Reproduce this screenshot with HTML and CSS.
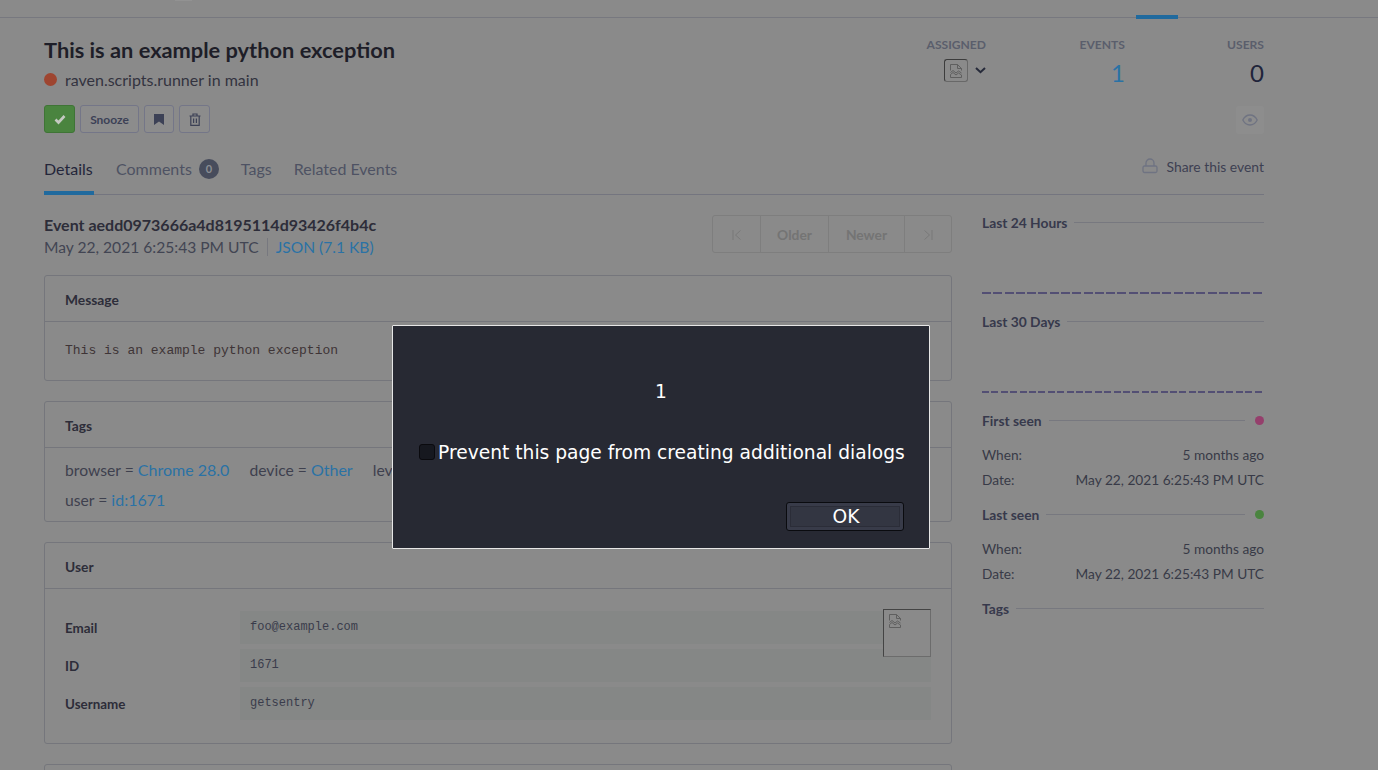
FILE: index.html
```html
<!DOCTYPE html>
<html lang="en">
<head>
  <meta charset="UTF-8">
  <title>This is an example python exception</title>
  <link rel="stylesheet" href="styles.css">
</head>
<body>
  <div class="topbar">
    <span class="topbar-mark"></span>
    <span class="topbar-tab"></span>
  </div>

  <div class="group-header">
    <div class="group-main">
      <h1 class="group-title">This is an example python exception</h1>
      <div class="group-sub"><span class="dot dot-error"></span>raven.scripts.runner in main</div>
      <div class="actions">
        <button class="btn btn-resolve">
          <svg width="12" height="12" viewBox="0 0 12 12"><path d="M1.500 6.500l3 3 6-6.500" fill="none" stroke="#c5c9c2" stroke-width="2.600"/></svg>
        </button>
        <button class="btn btn-snooze">Snooze</button>
        <button class="btn btn-icon">
          <svg width="10" height="11" viewBox="0 0 10 11"><path d="M0 0h10v11L5 7.500 0 11z" fill="#3c4156"/></svg>
        </button>
        <button class="btn btn-icon btn-trash">
          <svg width="12" height="13" viewBox="0 0 12 13"><path d="M.5 3h11M4 3V1h4v2M1.800 3v9.300h8.400V3M4.600 5.500v4.600M7.400 5.500v4.600" fill="none" stroke="#3c4156" stroke-width="1.200"/></svg>
        </button>
      </div>
    </div>
    <div class="group-stats">
      <div class="stat stat-assigned">
        <div class="stat-label">ASSIGNED</div>
        <div class="assignee">
          <span class="assignee-box">
            <svg class="broken" width="12" height="14" viewBox="0 0 12 14"><path d="M.5 6.500V.5h7L11.500 4.500v2M7.500.5v4h4M.5 8.500l2.500-2 3 2.500 2.500-2 3 2M.5 10.500l2.500-2 3 2.500 2.500-2 3 2v2.500H.5z" fill="none" stroke="#5f5f5f" stroke-width="1"/></svg>
          </span>
          <svg width="11" height="7" viewBox="0 0 11 7"><path d="M1 1l4.500 4.200L10 1" fill="none" stroke="#262a3a" stroke-width="2"/></svg>
        </div>
      </div>
      <div class="stat stat-events">
        <div class="stat-label">EVENTS</div>
        <div class="stat-value stat-link">1</div>
      </div>
      <div class="stat stat-users">
        <div class="stat-label">USERS</div>
        <div class="stat-value">0</div>
      </div>
      <div class="watch">
        <svg width="16" height="12" viewBox="0 0 16 12"><path d="M.8 6C2.500 2.800 5 1 8 1s5.500 1.800 7.200 5C13.500 9.200 11 11 8 11S2.500 9.200.8 6z" fill="none" stroke="#6f7382" stroke-width="1.300"/><circle cx="8" cy="6" r="2" fill="#6f7382"/></svg>
      </div>
    </div>
  </div>

  <div class="tabs">
    <a class="tab tab-active">Details</a>
    <a class="tab">Comments <span class="badge">0</span></a>
    <a class="tab">Tags</a>
    <a class="tab">Related Events</a>
    <a class="share">
      <svg width="16" height="16" viewBox="0 0 16 16"><path d="M4 8V5a4 4 0 0 1 8 0v3" fill="none" stroke="#6f7382" stroke-width="1.300"/><rect x="1" y="8" width="14" height="6.500" rx="1.500" fill="none" stroke="#6f7382" stroke-width="1.300"/></svg>
      Share this event
    </a>
  </div>

  <div class="content">
    <div class="main">
      <div class="event-bar">
        <div>
          <div class="event-id">Event aedd0973666a4d8195114d93426f4b4c</div>
          <div class="event-date">May 22, 2021 6:25:43 PM UTC<span class="event-json">JSON (7.1 KB)</span></div>
        </div>
        <div class="pager">
          <span class="pager-cell pager-end">
            <svg width="10" height="10" viewBox="0 0 10 10"><path d="M1 0v10M8.500 0.500L3.500 5l5 4.500" fill="none" stroke="#797979" stroke-width="1"/></svg>
          </span>
          <span class="pager-cell pager-older">Older</span>
          <span class="pager-cell pager-newer">Newer</span>
          <span class="pager-cell pager-end">
            <svg width="10" height="10" viewBox="0 0 10 10"><path d="M9 0v10M1.500 0.500L6.500 5l-5 4.500" fill="none" stroke="#797979" stroke-width="1"/></svg>
          </span>
        </div>
      </div>

      <section class="panel">
        <h3 class="panel-head">Message</h3>
        <div class="panel-body message-body">This is an example python exception</div>
      </section>

      <section class="panel">
        <h3 class="panel-head">Tags</h3>
        <div class="panel-body tags-body">
          <span class="tag">browser = <a>Chrome 28.0</a></span>
          <span class="tag">device = <a>Other</a></span>
          <span class="tag">level = <a>error</a></span>
          <span class="tag">user = <a>id:1671</a></span>
        </div>
      </section>

      <section class="panel panel-user">
        <h3 class="panel-head">User</h3>
        <div class="panel-body user-body">
          <div class="kv"><span class="kv-key">Email</span><code class="kv-val">foo@example.com</code></div>
          <div class="kv"><span class="kv-key">ID</span><code class="kv-val">1671</code></div>
          <div class="kv"><span class="kv-key">Username</span><code class="kv-val">getsentry</code></div>
          <div class="user-avatar">
            <svg width="12" height="14" viewBox="0 0 12 14"><path d="M.5 6.500V.5h7L11.500 4.500v2M7.500.5v4h4M.5 8.500l2.500-2 3 2.500 2.500-2 3 2M.5 10.500l2.500-2 3 2.500 2.500-2 3 2v2.500H.5z" fill="none" stroke="#5f5f5f" stroke-width="1"/></svg>
          </div>
        </div>
      </section>

      <section class="panel panel-next"></section>
    </div>

    <aside class="sidebar">
      <div class="side-head"><span>Last 24 Hours</span><i class="rule"></i></div>
      <div class="chart chart-24"></div>
      <div class="side-head"><span>Last 30 Days</span><i class="rule"></i></div>
      <div class="chart chart-30"></div>

      <div class="side-head side-seen"><span>First seen</span><i class="rule"></i><span class="dot-small dot-first"></span></div>
      <div class="side-row"><span>When:</span><span>5 months ago</span></div>
      <div class="side-row"><span>Date:</span><span>May 22, 2021 6:25:43 PM UTC</span></div>

      <div class="side-head side-seen side-last"><span>Last seen</span><i class="rule"></i><span class="dot-small dot-last"></span></div>
      <div class="side-row"><span>When:</span><span>5 months ago</span></div>
      <div class="side-row"><span>Date:</span><span>May 22, 2021 6:25:43 PM UTC</span></div>

      <div class="side-head side-tags"><span>Tags</span><i class="rule"></i></div>
    </aside>
  </div>

  <div class="dialog">
    <div class="dialog-msg">1</div>
    <label class="dialog-check"><span class="check-box"></span>Prevent this page from creating additional dialogs</label>
    <div class="dialog-foot"><button class="dialog-ok"><span>OK</span></button></div>
  </div>
</body>
</html>
```

FILE: styles.css
```css
* {
  box-sizing: border-box;
}

html, body {
  height: 770px;
  overflow: hidden;
}

body {
  margin: 0;
  background-color: #8a8a8a;
  color: #33333f;
  font-family: Lato, sans-serif;
  font-size: 16px;
}

a {
  color: #2a72a5;
}

/* top strip */
.topbar {
  position: relative;
  height: 18px;
  border-bottom: 1px solid #77787f;
}

.topbar-mark {
  position: absolute;
  left: 175px;
  top: 0;
  width: 17px;
  height: 1px;
  background-color: #929292;
}

.topbar-tab {
  position: absolute;
  left: 1136px;
  top: 15px;
  width: 42px;
  height: 4px;
  background-color: #206a9e;
}

/* group header */
.group-header {
  display: flex;
  justify-content: space-between;
  padding: 0 114px 0 44px;
  height: 126px;
}

.group-title {
  margin: 18px 0 0;
  font-size: 21.800px;
  line-height: 28px;
  font-weight: 700;
  color: #1e1e28;
}

.group-sub {
  display: flex;
  align-items: center;
  margin-top: 5px;
  height: 20px;
  color: #33333f;
}

.dot {
  width: 13px;
  height: 13px;
  border-radius: 50%;
  margin-right: 8px;
}

.dot-error {
  background-color: #9e4530;
}

.actions {
  display: flex;
  gap: 5px;
  margin-top: 16px;
}

.btn {
  display: flex;
  align-items: center;
  justify-content: center;
  height: 28px;
  padding: 0;
  border: 1px solid #747688;
  border-radius: 3px;
  background-color: #8c8c8c;
  font-family: Lato, sans-serif;
  font-size: 12px;
  font-weight: 700;
  color: #3c4156;
}

.btn-resolve {
  width: 31px;
  background-color: #4a843f;
  border-color: #3f7436;
}

.btn-snooze {
  width: 59px;
}

.btn-icon {
  width: 30px;
}

.btn-trash {
  width: 31px;
}

.group-stats {
  display: grid;
  grid-template-columns: 60px 139px 139px;
  grid-template-rows: 57px auto;
  padding-top: 20px;
  height: 126px;
}

.stat {
  text-align: right;
}

.stat-label {
  font-size: 12.100px;
  line-height: 14px;
  font-weight: 700;
  color: #5a5e6c;
}

.stat-value {
  font-size: 24px;
  line-height: 30px;
  margin-top: 6px;
  color: #20243a;
}

.stat-link {
  color: #2a72a5;
}

.assignee {
  display: flex;
  align-items: center;
  justify-content: flex-end;
  gap: 7px;
  margin-top: 7px;
}

.assignee-box {
  display: block;
  width: 24px;
  height: 23px;
  padding: 4px 5px;
  border: 1px solid #3c3c3c;
  border-right-color: #686868;
  border-bottom-color: #686868;
  border-radius: 3px;
}

.broken {
  display: block;
}

.watch {
  grid-column: 3;
  justify-self: end;
  display: flex;
  align-items: center;
  justify-content: center;
  width: 28px;
  height: 28px;
  margin-top: 11px;
  border-radius: 2px;
  background-color: #8d8d8d;
}

/* tabs */
.tabs {
  display: flex;
  align-items: flex-start;
  gap: 22px;
  margin: 0 114px 0 44px;
  height: 51px;
  border-bottom: 1px solid #74757f;
}

.tab {
  display: flex;
  align-items: center;
  gap: 7px;
  height: 51px;
  padding-bottom: 2px;
  font-size: 16px;
  color: #4e5263;
}

.tab-active {
  width: 50px;
  color: #24263a;
  border-bottom: 4px solid #206a9e;
  padding-top: 2px;
  padding-bottom: 0;
}

.badge {
  display: inline-block;
  width: 20px;
  height: 20px;
  border-radius: 50%;
  background-color: #474c5c;
  color: #8a8e94;
  font-size: 11px;
  font-weight: 700;
  line-height: 20px;
  text-align: center;
}

.share {
  display: flex;
  align-items: center;
  gap: 9px;
  margin-left: auto;
  height: 44px;
  font-size: 13.900px;
  color: #3d4052;
}

/* content */
.content {
  display: grid;
  grid-template-columns: 908px 282px;
  gap: 30px;
  padding: 0 114px 0 44px;
}

.event-bar {
  display: flex;
  justify-content: space-between;
  padding-top: 19px;
  height: 80px;
}

.event-id {
  font-size: 16px;
  font-weight: 700;
  line-height: 22px;
  color: #2d2d39;
}

.event-date {
  font-size: 15.600px;
  line-height: 22px;
  color: #424553;
}

.event-json {
  margin-left: 8px;
  padding-left: 8px;
  border-left: 1px solid #77787f;
  color: #2a72a5;
}

.pager {
  display: flex;
  height: 38px;
  margin-top: 1px;
  border: 1px solid #7e7e7e;
  border-radius: 3px;
  font-size: 13.800px;
  font-weight: 700;
  color: #747474;
}

.pager-cell {
  display: flex;
  align-items: center;
  justify-content: center;
  padding-top: 1px;
  border-left: 1px solid #7e7e7e;
}

.pager-cell:first-child {
  border-left: 0;
}

.pager-end {
  width: 47px;
}

.pager-older {
  width: 68px;
}

.pager-newer {
  width: 76px;
}

.panel {
  margin-bottom: 20px;
  border: 1px solid #75767c;
  border-radius: 3px;
}

.panel-head {
  margin: 0;
  padding-left: 20px;
  height: 46px;
  border-bottom: 1px solid #75767c;
  font-size: 13.800px;
  font-weight: 700;
  line-height: 48px;
  color: #2d2d39;
}

.message-body {
  height: 58px;
  padding: 21px 20px 0;
  font-family: "Liberation Mono", monospace;
  font-size: 13px;
  line-height: 15px;
  color: #3e3436;
}

.tags-body {
  height: 73px;
  padding: 7px 20px 0;
  line-height: 29px;
}

.tag {
  display: inline-block;
  margin-right: 16px;
  font-size: 15.700px;
  color: #3e404e;
}

.tag a {
  font-size: 16px;
}

.tags-body .tag:last-child {
  display: block;
}

.user-body {
  position: relative;
  height: 154px;
  padding: 22px 20px 0;
}

.kv {
  display: grid;
  grid-template-columns: 175px 1fr;
  align-items: center;
  height: 33px;
  margin-bottom: 5px;
}

.kv-key {
  font-size: 13.400px;
  font-weight: 700;
  color: #2d2d39;
}

.kv-val {
  height: 33px;
  padding: 0 10px;
  background-color: #858786;
  font-family: "Liberation Mono", monospace;
  font-size: 12px;
  line-height: 33px;
  color: #3a3c4b;
}

.user-avatar {
  position: absolute;
  top: 20px;
  right: 20px;
  width: 48px;
  height: 48px;
  padding: 4px 5px;
  background-color: #8a8a8a;
  border: 1px solid #444;
  border-right-color: #6c6c6c;
  border-bottom-color: #6c6c6c;
}

.user-avatar svg {
  display: block;
}

.panel-next {
  height: 40px;
}

/* sidebar */
.sidebar {
  padding-top: 17px;
}

.side-head {
  display: flex;
  align-items: center;
  gap: 7px;
  height: 20px;
  font-size: 13.800px;
  font-weight: 700;
  color: #37394c;
}

.rule {
  flex: 1;
  height: 1px;
  background-color: #77787f;
}

.chart {
  height: 79px;
}

.chart-24 {
  background: repeating-linear-gradient(90deg, #534f74 0 9px, transparent 9px 11.280px) 0 60px / 100% 2px no-repeat;
}

.chart-30 {
  background: repeating-linear-gradient(90deg, #534f74 0 7px, transparent 7px 9.400px) 0 60px / 100% 2px no-repeat;
}

.side-last {
  margin-top: 14px;
}

.side-tags {
  margin-top: 14px;
}

.dot-small {
  width: 9px;
  height: 9px;
  border-radius: 50%;
  margin-left: 3px;
}

.dot-first {
  background-color: #953f6c;
}

.dot-last {
  background-color: #4a843f;
}

.side-row {
  display: flex;
  justify-content: space-between;
  margin-top: 5px;
  height: 20px;
  font-size: 13.700px;
  line-height: 20px;
  color: #383a47;
}

.side-head + .side-row {
  margin-top: 15px;
}

/* browser dialog, sits over the page */
.dialog {
  position: absolute;
  left: 392px;
  top: 325px;
  width: 538px;
  height: 224px;
  border: 1px solid #e6e6e6;
  border-radius: 1px;
  background-color: #272933;
  color: #fff;
  font-family: "DejaVu Sans", sans-serif;
  font-size: 18.670px;
}

.dialog-msg {
  margin-top: 55px;
  height: 22px;
  line-height: 22px;
  text-align: center;
}

.dialog-check {
  display: flex;
  align-items: center;
  margin: 38px 24px 0 26px;
  height: 22px;
  white-space: nowrap;
}

.check-box {
  width: 16px;
  height: 16px;
  margin-right: 3px;
  border: 1px solid #0a0a0e;
  border-radius: 3px;
  background-color: #16181f;
}

.dialog-foot {
  display: flex;
  justify-content: flex-end;
  margin: 39px 25px 0 0;
}

.dialog-ok {
  width: 118px;
  height: 29px;
  padding: 3px;
  border: 1px solid #0a0b0f;
  border-radius: 3px;
  background-color: #383b49;
  color: #fff;
  font-family: "DejaVu Sans", sans-serif;
  font-size: 18.670px;
}

.dialog-ok span {
  display: block;
  height: 21px;
  padding-left: 2px;
  line-height: 20px;
  border: 1px solid #2b2d38;
  background-color: #333642;
}
```
